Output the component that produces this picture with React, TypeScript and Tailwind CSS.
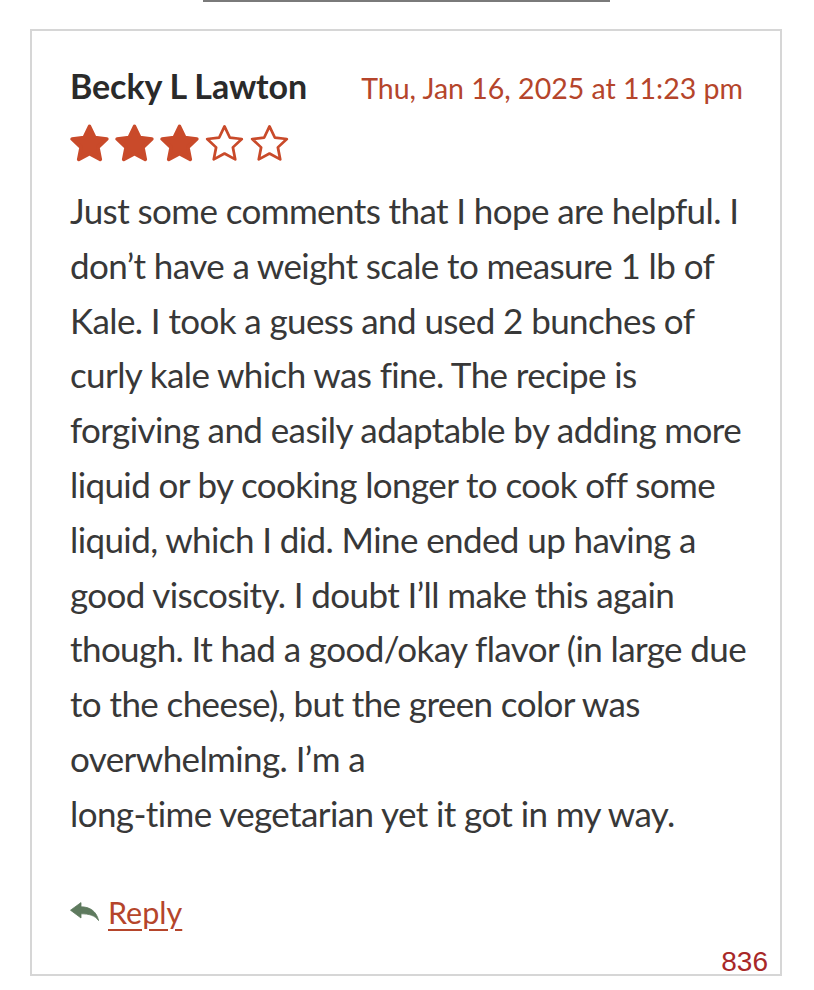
import React from "react";

const lines = [
  "Just some comments that I hope are helpful. I",
  "don’t have a weight scale to measure 1 lb of",
  "Kale. I took a guess and used 2 bunches of",
  "curly kale which was fine. The recipe is",
  "forgiving and easily adaptable by adding more",
  "liquid or by cooking longer to cook off some",
  "liquid, which I did. Mine ended up having a",
  "good viscosity. I doubt I’ll make this again",
  "though. It had a good/okay flavor (in large due",
  "to the cheese), but the green color was",
  "overwhelming. I’m a",
  "long-time vegetarian yet it got in my way.",
];

function Star({ filled }: { filled: boolean }) {
  return (
    <svg width="39" height="38" viewBox="1.3 1 21.4 20.6" className="shrink-0">
      <path
        d="M12 2.2l2.9 6.1 6.6.8-4.9 4.6 1.3 6.6L12 17.1l-5.9 3.2 1.3-6.6-4.9-4.6 6.6-.8z"
        fill={filled ? "#c94a2a" : "none"}
        stroke="#c94a2a"
        strokeWidth={filled ? 2 : 1.5}
        strokeLinejoin="round"
      />
    </svg>
  );
}

function ReplyIcon() {
  return (
    <svg width="29" height="19" viewBox="0 0 29 19" className="shrink-0">
      <path
        d="M0.5 8.2 L11 0.6 L11 4.8 C19.5 4.8 26.5 9 28.6 18.6 C25 13.4 19 11.8 11 11.8 L11 16 Z"
        fill="#5e7a5e"
        stroke="#5e7a5e"
        strokeWidth="0.8"
        strokeLinejoin="round"
      />
    </svg>
  );
}

export default function App() {
  return (
    <div className="min-h-[990px] w-[814px] bg-white relative overflow-hidden" style={{ fontFamily: "Lato, 'Noto Sans', sans-serif" }}>
      <div className="ml-[203px] w-[407px] h-[2px] bg-[#7a7a7a]" />
      <div className="mt-[27px] ml-[30px] w-[752px] h-[947px] border-2 border-[#d6d6d6] bg-white relative">
        <div className="pl-[38px] pt-[35px] pr-[37px]">
          <div className="flex items-baseline justify-between leading-[40px]">
            <div className="text-[34px] font-bold text-[#2a2a2a] tracking-[-0.1px]">Becky L Lawton</div>
            <div className="text-[28.5px] text-[#b5452b]">Thu, Jan 16, 2025 at 11:23 pm</div>
          </div>
          <div className="flex gap-[6px] mt-[16px]">
            <Star filled />
            <Star filled />
            <Star filled />
            <Star filled={false} />
            <Star filled={false} />
          </div>
          <div className="mt-[21px] text-[35px] leading-[54.8px] tracking-[-0.6px] text-[#383838]">
            {lines.map((l, i) => (
              <div key={i} className="whitespace-nowrap">{l}</div>
            ))}
          </div>
          <div className="mt-[51px] flex items-center gap-[9px] leading-[40px]">
            <ReplyIcon />
            <a href="#" className="text-[30.5px] text-[#b5452b] underline decoration-[2px] underline-offset-[5px]">Reply</a>
          </div>
        </div>
        <div className="absolute right-[12px] bottom-[-2px] text-[28px] leading-none text-[#a82828]" style={{ fontFamily: "'Liberation Sans', Arial, sans-serif" }}>836</div>
      </div>
    </div>
  );
}
